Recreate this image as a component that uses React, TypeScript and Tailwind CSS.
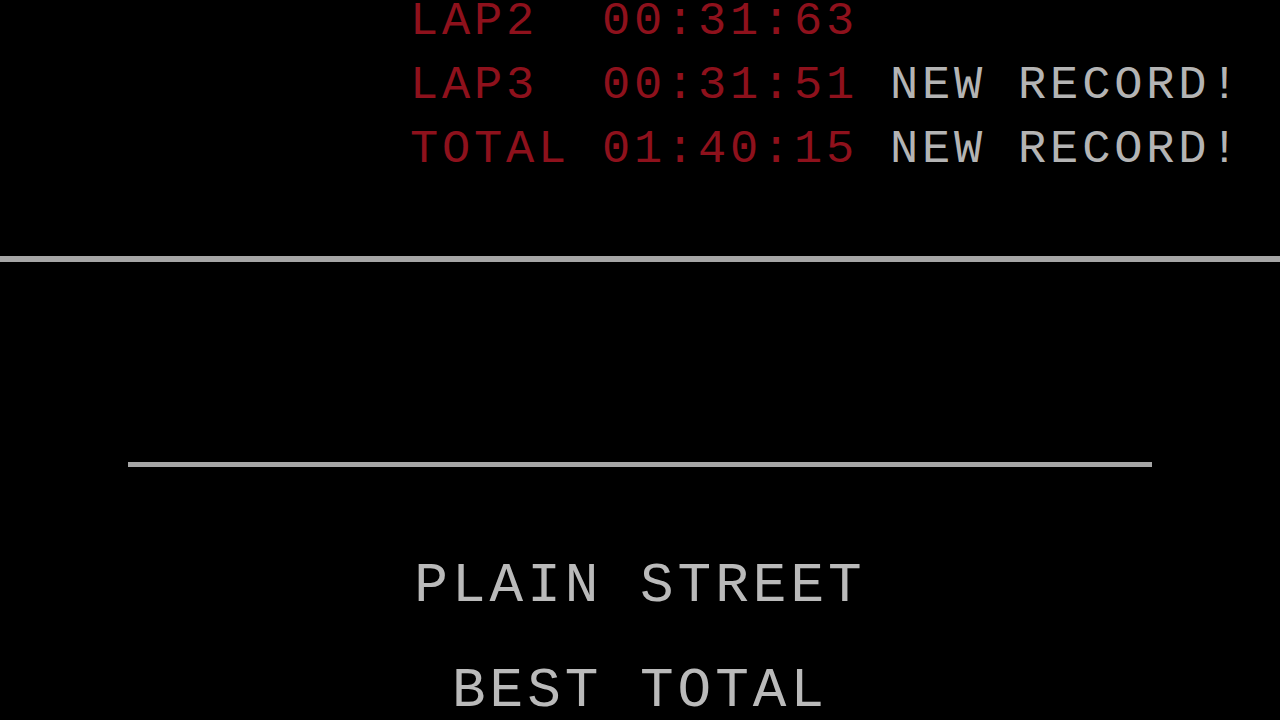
const rows = [
  { label: 'LAP2 ', time: '00:31:63', record: false },
  { label: 'LAP3 ', time: '00:31:51', record: true },
  { label: 'TOTAL', time: '01:40:15', record: true },
];

export default function App() {
  return (
    <div
      className="h-[720px] w-[1280px] overflow-hidden bg-black"
      style={{ fontFamily: '"Liberation Mono", "DejaVu Sans Mono", monospace' }}
    >
      {/* lap times */}
      <div className="-mt-[10px] pl-[410px]">
        {rows.map((r) => (
          <div
            key={r.label}
            className="h-[64px] whitespace-pre text-[47px] leading-[64px] tracking-[3.8px]"
          >
            <span className="text-[#8e111c]">
              {r.label} {r.time}
            </span>
            {r.record && <span className="text-[#b4b4b4]"> NEW RECORD!</span>}
          </div>
        ))}
      </div>

      <div className="mt-[74px] h-[6px] w-full bg-[#a6a6a6]" />

      <div className="mx-auto mt-[200px] h-[5px] w-[1024px] bg-[#a6a6a6]" />

      {/* course name */}
      <div className="mt-[89px] flex flex-col items-center text-[56px] leading-[60px] tracking-[4px] text-[#bababa]">
        <div className="whitespace-pre">PLAIN STREET</div>
        <div className="mt-[45px] whitespace-pre">BEST TOTAL</div>
      </div>
    </div>
  );
}
